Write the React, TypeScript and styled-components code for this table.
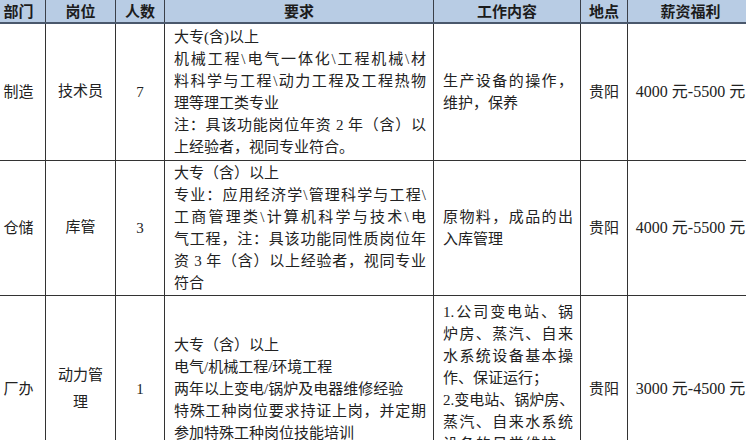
import styled, { createGlobalStyle } from "styled-components";

type Line = { t: string; full?: boolean };

type Job = {
  dept: string;
  post: string[];
  count: string;
  req: Line[];
  work: Line[];
  place: string;
  pay: string;
  height: number;
};

const columns = [
  { name: "部门", width: 54 },
  { name: "岗位", width: 70 },
  { name: "人数", width: 49 },
  { name: "要求", width: 269 },
  { name: "工作内容", width: 147 },
  { name: "地点", width: 47 },
  { name: "薪资福利", width: 126 },
];

const jobs: Job[] = [
  {
    dept: "制造",
    post: ["技术员"],
    count: "7",
    req: [
      { t: "大专(含)以上" },
      { t: "机械工程\\电气一体化\\工程机械\\材", full: true },
      { t: "料科学与工程\\动力工程及工程热物", full: true },
      { t: "理等理工类专业" },
      { t: "注：具该功能岗位年资 2 年（含）以", full: true },
      { t: "上经验者，视同专业符合。" },
    ],
    work: [{ t: "生产设备的操作，", full: true }, { t: "维护，保养" }],
    place: "贵阳",
    pay: "4000 元-5500 元",
    height: 137,
  },
  {
    dept: "仓储",
    post: ["库管"],
    count: "3",
    req: [
      { t: "大专（含）以上" },
      { t: "专业：应用经济学\\管理科学与工程\\", full: true },
      { t: "工商管理类\\计算机科学与技术\\电", full: true },
      { t: "气工程，注：具该功能同性质岗位年", full: true },
      { t: "资 3 年（含）以上经验者，视同专业", full: true },
      { t: "符合" },
    ],
    work: [{ t: "原物料，成品的出", full: true }, { t: "入库管理" }],
    place: "贵阳",
    pay: "4000 元-5500 元",
    height: 135,
  },
  {
    dept: "厂办",
    post: ["动力管", "理"],
    count: "1",
    req: [
      { t: "大专（含）以上" },
      { t: "电气/机械工程/环境工程" },
      { t: "两年以上变电/锅炉及电器维修经验" },
      { t: "特殊工种岗位要求持证上岗，并定期", full: true },
      { t: "参加特殊工种岗位技能培训" },
    ],
    work: [
      { t: "1.公司变电站、锅", full: true },
      { t: "炉房、蒸汽、自来", full: true },
      { t: "水系统设备基本操", full: true },
      { t: "作、保证运行；" },
      { t: "2.变电站、锅炉房、", full: true },
      { t: "蒸汽、自来水系统", full: true },
      { t: "设备的日常维护、", full: true },
      { t: "保养。" },
    ],
    place: "贵阳",
    pay: "3000 元-4500 元",
    height: 188,
  },
];

const GlobalStyle = createGlobalStyle`
  html, body {
    margin: 0;
    padding: 0;
    background: #ffffff;
    overflow: hidden;
  }
  body {
    font-family: "Liberation Serif", "Noto Sans CJK SC", serif;
  }
`;

const Viewport = styled.div`
  width: 746px;
  height: 440px;
  overflow: hidden;
`;

const Sheet = styled.table`
  border-collapse: collapse;
  table-layout: fixed;
  width: 762px;
  margin-left: -9px;
`;

const Col = styled.col<{ $w: number }>`
  width: ${(p) => p.$w}px;
`;

const HeadCell = styled.th`
  height: 22px;
  padding: 0;
  background: #b8cce4;
  border-left: 1px solid #3a3f48;
  border-right: 1px solid #3a3f48;
  border-bottom: 2px solid #4a586c;
  color: #1c1c1c;
  font-family: "Noto Sans CJK SC", sans-serif;
  font-size: 15px;
  font-weight: 700;
  line-height: 22px;
  text-align: center;
  white-space: nowrap;
`;

const Row = styled.tr<{ $h: number }>`
  height: ${(p) => p.$h}px;
`;

const Cell = styled.td<{ $text?: boolean }>`
  border: 1px solid #333333;
  padding: ${(p) => (p.$text ? "0 7px 0 9px" : "0 4px")};
  vertical-align: middle;
  text-align: ${(p) => (p.$text ? "left" : "center")};
  color: #222222;
  font-size: 15px;
  line-height: 22px;
`;

const PayCell = styled(Cell)`
  font-size: 16px;
  white-space: nowrap;
`;

const PostLine = styled.div`
  line-height: 27px;
`;

const TextLine = styled.div<{ $full?: boolean }>`
  white-space: nowrap;
  text-align: ${(p) => (p.$full ? "justify" : "left")};
  text-align-last: ${(p) => (p.$full ? "justify" : "auto")};
`;

const Lines = ({ lines }: { lines: Line[] }) => (
  <>
    {lines.map((l, i) => (
      <TextLine key={i} $full={l.full}>
        {l.t}
      </TextLine>
    ))}
  </>
);

export default function App() {
  return (
    <Viewport>
      <GlobalStyle />
      <Sheet>
        <colgroup>
          {columns.map((c) => (
            <Col key={c.name} $w={c.width} />
          ))}
        </colgroup>
        <thead>
          <tr>
            {columns.map((c) => (
              <HeadCell key={c.name}>{c.name}</HeadCell>
            ))}
          </tr>
        </thead>
        <tbody>
          {jobs.map((job) => (
            <Row key={job.dept} $h={job.height}>
              <Cell>{job.dept}</Cell>
              <Cell>
                {job.post.map((p) => (
                  <PostLine key={p}>{p}</PostLine>
                ))}
              </Cell>
              <Cell>{job.count}</Cell>
              <Cell $text>
                <Lines lines={job.req} />
              </Cell>
              <Cell $text>
                <Lines lines={job.work} />
              </Cell>
              <Cell>{job.place}</Cell>
              <PayCell>{job.pay}</PayCell>
            </Row>
          ))}
        </tbody>
      </Sheet>
    </Viewport>
  );
}
